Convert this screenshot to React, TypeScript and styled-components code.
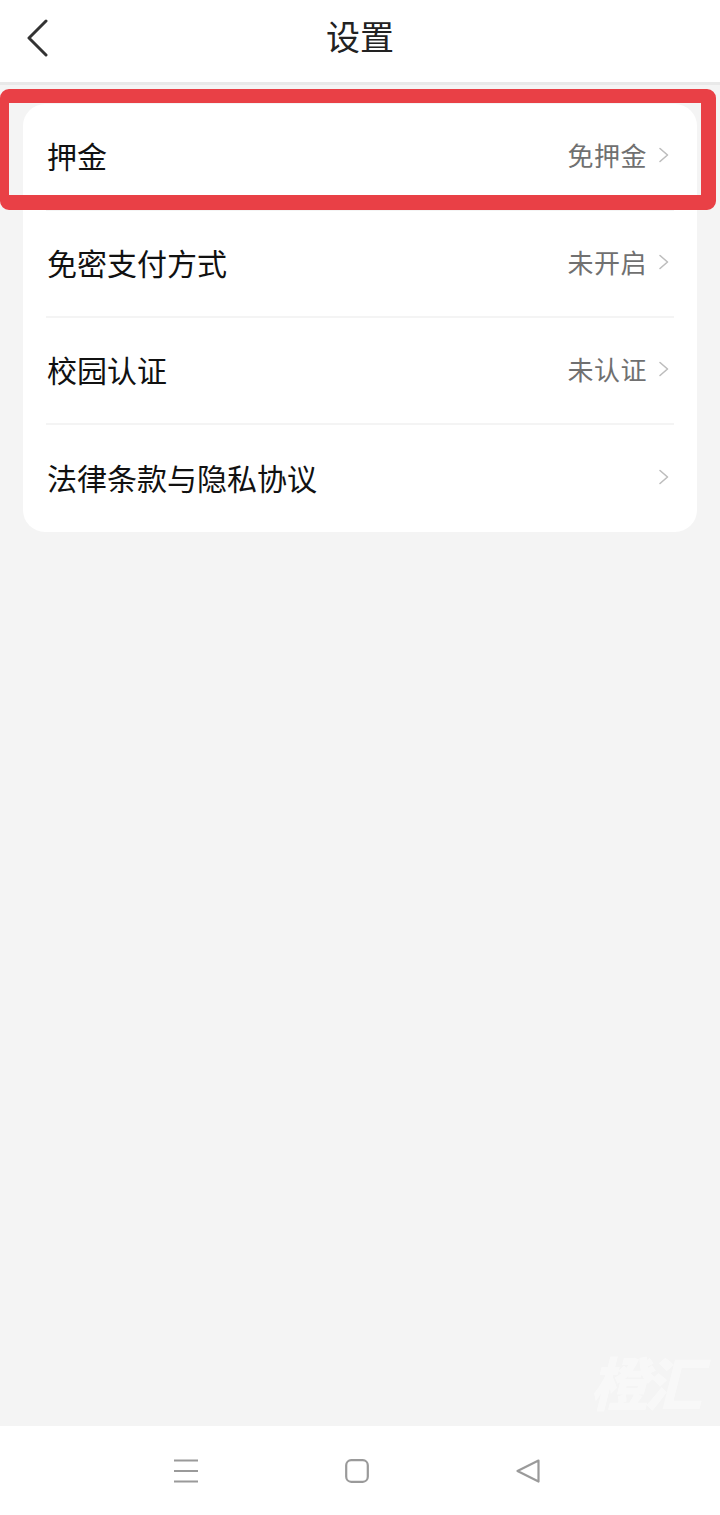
import React from "react";
import styled, { createGlobalStyle } from "styled-components";

const Global = createGlobalStyle`
  html, body { margin: 0; padding: 0; }
  body {
    background: #f4f4f4;
    font-family: "Noto Sans CJK SC", "Noto Sans", sans-serif;
  }
`;

const Page = styled.div`
  position: relative;
  width: 720px;
  height: 1515px;
  background: #f4f4f4;
  display: flex;
  flex-direction: column;
  overflow: hidden;
`;

const Header = styled.header`
  height: 82px;
  background: #ffffff;
  border-bottom: 3px solid #e9e9e9;
  display: grid;
  grid-template-columns: 80px 1fr 80px;
  align-items: center;
`;

const BackButton = styled.div`
  display: flex;
  align-items: center;
  padding-left: 26px;
  padding-bottom: 6px;
  height: 100%;
  box-sizing: border-box;
`;

const Title = styled.h1`
  margin: 0;
  text-align: center;
  font-size: 34px;
  font-weight: 400;
  color: #222;
  line-height: 1;
  padding-bottom: 10px;
`;

const Body = styled.main`
  flex: 1;
  padding: 19px 23px 0;
`;

const Card = styled.section`
  background: #ffffff;
  border-radius: 22px;
  overflow: hidden;
`;

const Row = styled.div<{ $last?: boolean }>`
  height: 107px;
  margin: 0 23px;
  padding-bottom: 4px;
  display: flex;
  align-items: center;
  justify-content: space-between;
  border-bottom: ${(p) => (p.$last ? "none" : "2px solid #f4f4f4")};
  box-sizing: border-box;
`;

const Label = styled.span`
  font-size: 30px;
  color: #111;
  padding-left: 1px;
`;

const Right = styled.span`
  display: flex;
  align-items: center;
  gap: 11px;
  margin-right: 4px;
`;

const Value = styled.span`
  font-size: 26px;
  color: #707070;
  letter-spacing: 0.5px;
`;

const Highlight = styled.div`
  position: absolute;
  left: 0;
  top: 89px;
  width: 716px;
  height: 121px;
  box-sizing: border-box;
  border-style: solid;
  border-color: #e94046;
  border-width: 14px 15px 15px 9px;
  border-radius: 9px;
  pointer-events: none;
`;

const NavBar = styled.nav`
  height: 89px;
  background: #ffffff;
  display: flex;
  justify-content: center;
  align-items: center;
  gap: 147px;
  padding-right: 7px;
`;

const Watermark = styled.div`
  position: absolute;
  right: 22px;
  bottom: 92px;
  font-size: 58px;
  font-style: italic;
  font-weight: 900;
  color: #ffffff;
  opacity: 0.45;
  letter-spacing: -4px;
  font-family: "Noto Sans CJK SC", sans-serif;
`;

const Chevron = () => (
  <svg width="12" height="16" viewBox="0 0 12 16" fill="none">
    <path d="M2 1.5 L9.5 8 L2 14.5" stroke="#bdbdbd" strokeWidth="1.6" strokeLinecap="round" strokeLinejoin="round" />
  </svg>
);

const BackIcon = () => (
  <svg width="24" height="38" viewBox="0 0 24 38" fill="none">
    <path d="M20 2 L3 19 L20 36" stroke="#333" strokeWidth="3" strokeLinecap="round" strokeLinejoin="round" />
  </svg>
);

const MenuIcon = () => (
  <svg width="24" height="24" viewBox="0 0 24 24" fill="none">
    <path d="M0 1.5 H24 M0 12 H24 M0 22.5 H24" stroke="#9a9a9a" strokeWidth="2.2" />
  </svg>
);

const HomeIcon = () => (
  <svg width="24" height="24" viewBox="0 0 24 24" fill="none">
    <rect x="1.2" y="1.2" width="21.6" height="21.6" rx="5" stroke="#9a9a9a" strokeWidth="2.2" />
  </svg>
);

const BackNavIcon = () => (
  <svg width="24" height="24" viewBox="0 0 24 24" fill="none">
    <path d="M22.5 1.5 L1.5 12 L22.5 22.5 Z" stroke="#9a9a9a" strokeWidth="2.2" strokeLinejoin="round" />
  </svg>
);

const items = [
  { label: "押金", value: "免押金" },
  { label: "免密支付方式", value: "未开启" },
  { label: "校园认证", value: "未认证" },
  { label: "法律条款与隐私协议", value: "" },
];

export default function App() {
  return (
    <Page>
      <Global />
      <Header>
        <BackButton>
          <BackIcon />
        </BackButton>
        <Title>设置</Title>
        <div />
      </Header>
      <Body>
        <Card>
          {items.map((it, i) => (
            <Row key={it.label} $last={i === items.length - 1}>
              <Label>{it.label}</Label>
              <Right>
                {it.value && <Value>{it.value}</Value>}
                <Chevron />
              </Right>
            </Row>
          ))}
        </Card>
      </Body>
      <Watermark>橙汇</Watermark>
      <NavBar>
        <MenuIcon />
        <HomeIcon />
        <BackNavIcon />
      </NavBar>
      <Highlight />
    </Page>
  );
}
